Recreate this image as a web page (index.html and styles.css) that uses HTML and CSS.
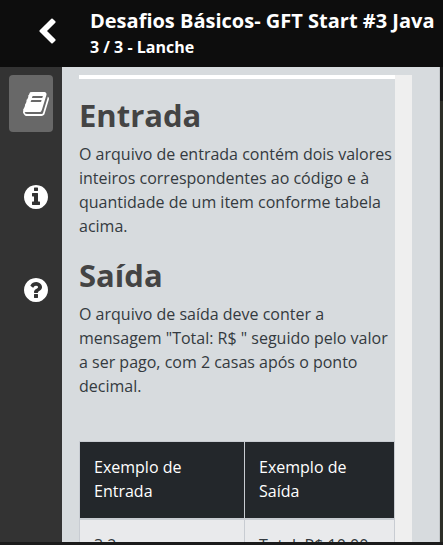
FILE: index.html
```html
<!DOCTYPE html>
<html lang="pt-BR">
<head>
<meta charset="utf-8">
<meta name="viewport" content="width=device-width, initial-scale=1">
<title>Desafios Básicos- GFT Start #3 Java</title>
<link rel="stylesheet" href="styles.css">
</head>
<body>
<header class="topbar">
  <a class="back" href="#" aria-label="Voltar">
    <svg class="icon" viewBox="0 0 1792 1792"><path d="M1427 301l-531 531 531 531q19 19 19 45t-19 45l-166 166q-19 19-45 19t-45-19l-742-742q-19-19-19-45t19-45l742-742q19-19 45-19t45 19l166 166q19 19 19 45t-19 45z"/></svg>
  </a>
  <div class="titles">
    <h1 class="title">Desafios Básicos- GFT Start #3 Java</h1>
    <p class="subtitle">3 / 3 - Lanche</p>
  </div>
</header>
<div class="workspace">
  <nav class="sidebar">
    <button class="tab tab-active" type="button" aria-label="Enunciado">
      <svg class="icon" viewBox="0 0 1792 1792"><path d="M1703 478q40 57 18 129l-275 906q-19 64-76.500 107.500t-122.500 43.500h-923q-77 0-148.500-53.500t-99.500-131.500q-24-67-2-127 0-4 3-27t4-37q1-8-3-21.500t-3-19.500q2-11 8-21t16.500-23.500 16.500-23.500q23-38 45-91.500t30-91.500q3-10 .5-30t-.5-28q3-11 17-28t17-23q21-36 42-92t25-90q1-9-2.500-32t.5-28q4-13 22-30.500t22-22.500q19-26 42.500-84.500t27.500-96.500q1-8-3-25.500t-2-26.500q2-8 9-18t18-23 17-21q8-12 16.500-30t15-34 16-36 19.500-32 26.500-23.500 36-11.500 47.500 5.500l-1 3q38-9 51-9h761q74 0 114 56t18 130l-274 906q-36 119-71.500 153.500t-128.500 34.500h-869q-27 0-38 15-11 16-1 43 24 70 144 70h923q29 0 56-15.500t35-41.500l300-987q7-22 5-57 38 15 59 43zm-1064 2q-4 13 2 22.500t20 9.500h608q13 0 25.500-9.500t16.500-22.500l21-64q4-13-2-22.500t-20-9.500h-608q-13 0-25.500 9.500t-16.500 22.500zm-83 256q-4 13 2 22.500t20 9.500h608q13 0 25.500-9.500t16.500-22.500l21-64q4-13-2-22.500t-20-9.500h-608q-13 0-25.500 9.500t-16.500 22.500z"/></svg>
    </button>
    <button class="tab" type="button" aria-label="Informações">
      <svg class="icon" viewBox="0 0 1792 1792"><path d="M1152 1376v-160q0-14-9-23t-23-9h-96v-512q0-14-9-23t-23-9h-320q-14 0-23 9t-9 23v160q0 14 9 23t23 9h96v320h-96q-14 0-23 9t-9 23v160q0 14 9 23t23 9h448q14 0 23-9t9-23zm-128-896v-160q0-14-9-23t-23-9h-192q-14 0-23 9t-9 23v160q0 14 9 23t23 9h192q14 0 23-9t9-23zm640 416q0 209-103 385.500t-279.500 279.500-385.500 103-385.500-103-279.500-279.500-103-385.500 103-385.500 279.500-279.500 385.500-103 385.500 103 279.500 279.500 103 385.500z"/></svg>
    </button>
    <button class="tab" type="button" aria-label="Ajuda">
      <svg class="icon" viewBox="0 0 1792 1792"><path d="M1024 1376v-192q0-14-9-23t-23-9h-192q-14 0-23 9t-9 23v192q0 14 9 23t23 9h192q14 0 23-9t9-23zm256-672q0-88-55.500-163t-138.500-116-170-41q-243 0-371 213-15 24 8 42l132 100q7 6 19 6 16 0 25-12 53-68 86-92 34-24 86-24 48 0 85.500 26t37.500 59q0 38-20 61t-68 45q-63 28-115.500 86.500t-52.500 125.500v36q0 14 9 23t23 9h192q14 0 23-9t9-23q0-19 21.500-49.500t54.500-49.500q32-18 49-28.500t46-35 44.500-48 28-60.500 12.500-81zm384 192q0 209-103 385.500t-279.500 279.500-385.500 103-385.500-103-279.500-279.500-103-385.500 103-385.500 279.500-279.500 385.500-103 385.500 103 279.500 279.500 103 385.500z"/></svg>
    </button>
  </nav>
  <main class="panel">
    <article class="statement">
      <h2>Entrada</h2>
      <p>O arquivo de entrada contém dois valores inteiros correspondentes ao código e à quantidade de um item conforme tabela acima.</p>
      <h2>Saída</h2>
      <p>O arquivo de saída deve conter a mensagem "Total: R$ " seguido pelo valor a ser pago, com 2 casas após o ponto decimal.</p>
      <table class="examples">
        <thead>
          <tr><th class="input-column" scope="col">Exemplo de Entrada</th><th scope="col">Exemplo de Saída</th></tr>
        </thead>
        <tbody>
          <tr><td>3 2</td><td>Total: R$ 10.00</td></tr>
        </tbody>
      </table>
    </article>
  </main>
  <div class="editor-edge"></div>
</div>
<footer class="bottom-edge"></footer>
</body>
</html>
```
FILE: styles.css
```css
* {
  box-sizing: border-box;
}

body {
  margin: 0;
  height: 100vh;
  display: flex;
  flex-direction: column;
  overflow: hidden;
  background: #1b1b1b;
  color: #343a40;
  font-family: "Open Sans", "Noto Sans", sans-serif;
  font-size: 16px;
  line-height: 24px;
}

h1,
h2,
p {
  margin: 0;
}

.icon {
  display: block;
  width: 28px;
  height: 28px;
  fill: #fff;
}

.topbar {
  flex: none;
  display: flex;
  align-items: flex-start;
  gap: 29px;
  padding: 8px 8px 7px 33px;
  background: #0d0d0d;
  color: #fff;
  white-space: nowrap;
}

.back {
  padding-top: 10px;
}

.title {
  font-size: 20px;
  line-height: 26px;
  font-weight: 700;
}

.subtitle {
  font-size: 16px;
  line-height: 26px;
  font-weight: 700;
}

.workspace {
  flex: 1;
  min-height: 0;
  display: flex;
}

.sidebar {
  flex: none;
  display: flex;
  flex-direction: column;
  gap: 36px;
  padding: 8px 9px;
  background: #333;
}

.tab {
  width: 44px;
  height: 57px;
  padding: 0 0 0 13px;
  border: 0;
  border-radius: 4px;
  background: transparent;
}

.tab-active {
  background: #686868;
}

.panel {
  flex: 1;
  min-width: 0;
  padding: 8px 27px 0 17px;
  overflow: hidden;
  background: #d7dbde;
}

.statement {
  height: 100%;
  overflow: hidden;
  border-right: 17px solid #efefef;
  background: linear-gradient(#fff, #fff) top / 100% 4px no-repeat;
  padding-top: 20px;
}

.statement h2 {
  margin-bottom: 7px;
  color: #444;
  font-size: 31px;
  line-height: 40px;
  font-weight: 700;
}

.statement p {
  margin-bottom: 17px;
}

.examples {
  width: 100%;
  margin-top: 43px;
  border-collapse: collapse;
  table-layout: fixed;
}

.examples th,
.examples td {
  padding: 13px 14px 15px;
  border: 1px solid #c8ccd2;
  text-align: left;
  font-weight: 400;
}

.examples th {
  border-bottom-width: 2px;
  background: #23272b;
  color: #fff;
}

.examples .input-column {
  width: 165px;
}

.examples td {
  background: #e9eaec;
}

.editor-edge {
  flex: none;
  width: 4px;
  border-left: 1px solid #c4c8cb;
  background: linear-gradient(#1a1a1a 34px, #2d2e27 34px);
}

.bottom-edge {
  flex: none;
  height: 3px;
  background: #1b1b1b;
}
```
